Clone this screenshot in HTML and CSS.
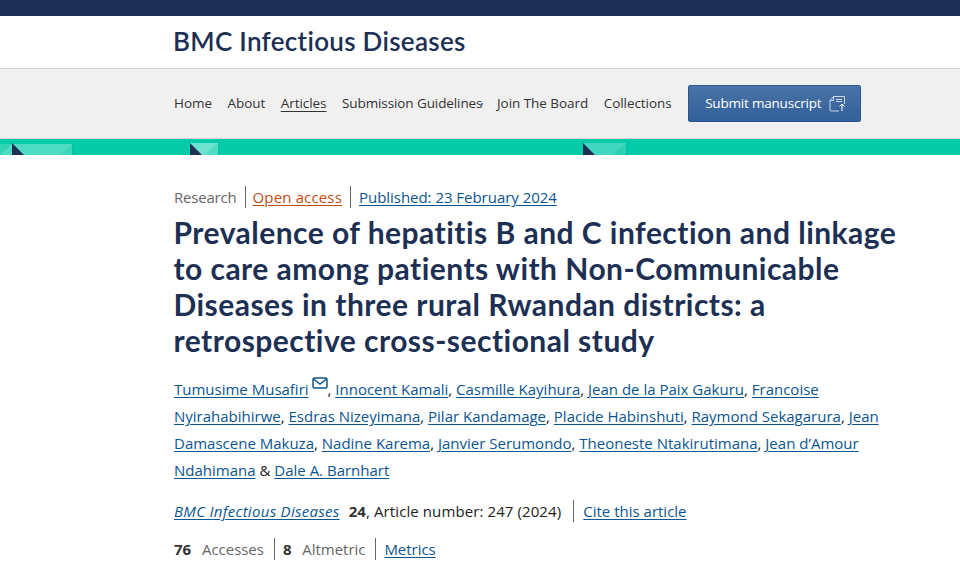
FILE: index.html
```html
<!DOCTYPE html>
<html lang="en">
    <head>
        <meta charset="UTF-8">
        <title>Prevalence of hepatitis B and C infection - BMC Infectious Diseases</title>
        <meta name="viewport" content="width=device-width, initial-scale=1">
        <link rel="stylesheet" href="styles.css">
    </head>
    <body>
        <div class="top-bar"></div>
        <header class="journal-head">
            <div class="wrap"><a class="journal-title" href="#">BMC Infectious Diseases</a></div>
        </header>
        <nav class="main-nav">
            <div class="wrap nav-row">
                <a href="#">Home</a>
                <a href="#">About</a>
                <a href="#" class="current">Articles</a>
                <a href="#" class="nav-guide">Submission Guidelines</a>
                <a href="#">Join The Board</a>
                <a href="#">Collections</a>
                <a href="#" class="submit"><span>Submit manuscript</span>
                    <svg class="submit-icon" width="18" height="17" viewBox="0 0 18 17" fill="none" stroke="#c9d6e8" stroke-width="1">
                        <path d="M1 5.5 4.5 1.5H15.5V9M1 5.5V15a1 1 0 0 0 1 1h8M1 5.5h3.5V1.5"/>
                        <path d="M7 4.5h6M7 6.5h6"/>
                        <path d="M13 16V9M10.500 11.500 13 9l2.500 2.500" stroke="#fff"/>
                    </svg>
                </a>
            </div>
        </nav>
        <div class="pattern">
            <svg class="pattern-art" width="960" height="16" viewBox="0 0 960 16">
                <rect x="0" y="5" width="72" height="11" fill="#4cdcc3"/>
                <path d="M0 16 12 5H0z" fill="#2fd3b6"/>
                <path d="M12 4 24 16H12z" fill="#1d3054"/>
                <path d="M60 16 72 5v11z" fill="#3ed6bc"/>
                <rect x="72" y="5" width="2" height="11" fill="#04c3a1"/>
                <rect x="190" y="4" width="28" height="12" fill="#6fe2cf"/>
                <path d="M190 4 202 16H190z" fill="#1d3054"/>
                <path d="M204 16 218 4v12z" fill="#52dcc5"/>
                <rect x="218" y="4" width="1" height="12" fill="#04c3a1"/>
                <rect x="583" y="4" width="43" height="12" fill="#41d8bf"/>
                <path d="M583 4 595 16H583z" fill="#1d3054"/>
                <path d="M612 16 626 4v12z" fill="#2dd2b4"/>
                <rect x="626" y="4" width="2" height="12" fill="#04c3a1"/>
            </svg>
        </div>
        <main class="wrap article">
            <ul class="meta-line">
                <li class="muted research">Research</li>
                <li><a href="#" class="open-access">Open access</a></li>
                <li><a href="#">Published: 23 February 2024</a></li>
            </ul>
            <h1 class="article-title">Prevalence of hepatitis B and C infection and linkage to care among patients with Non-Communicable Diseases in three rural Rwandan districts: a retrospective cross-sectional study</h1>
            <p class="authors">
                <span><a href="#">Tumusime Musafiri</a> <svg class="mail-icon" width="16" height="12" viewBox="0 0 16 12" fill="none" stroke="#0b5590" stroke-width="1.500"><rect x="1" y="1" width="14" height="10" rx="1.500"/><path d="M1.500 2 8 7l6.500-5"/></svg><span>, </span></span>
                <span><a href="#">Innocent Kamali</a><span>, </span></span>
                <span><a href="#">Casmille Kayihura</a><span>, </span></span>
                <span><a href="#">Jean de la Paix Gakuru</a><span>, </span></span>
                <a href="#">Francoise Nyirahabihirwe</a><span>, </span>
                <span><a href="#">Esdras Nizeyimana</a><span>, </span></span>
                <span><a href="#">Pilar Kandamage</a><span>, </span></span>
                <span><a href="#">Placide Habinshuti</a><span>, </span></span>
                <span><a href="#">Raymond Sekagarura</a><span>, </span></span>
                <a href="#">Jean Damascene Makuza</a><span>, </span>
                <span><a href="#">Nadine Karema</a><span>, </span></span>
                <span><a href="#">Janvier Serumondo</a><span>, </span></span>
                <span><a href="#">Theoneste Ntakirutimana</a><span>, </span></span>
                <a href="#">Jean d’Amour Ndahimana</a> <span>&amp;</span> <a href="#">Dale A. Barnhart</a>
            </p>
            <ul class="meta-line cite-line">
                <li><a href="#" class="journal-link"><i>BMC Infectious Diseases</i></a> <b class="vol">24</b><span>, Article number: 247 (2024)</span></li>
                <li><a href="#">Cite this article</a></li>
            </ul>
            <ul class="meta-line stats-line">
                <li class="muted"><b>76</b> <span>Accesses</span></li>
                <li class="muted"><b>8</b> <span>Altmetric</span></li>
                <li><a href="#">Metrics</a></li>
            </ul>
        </main>
    </body>
</html>
```

FILE: styles.css
```css
html, body{margin: 0; padding: 0;}
body{
    height: 584px;
    overflow: hidden;
    background: #fff;
    color: #222;
    font-family: "Open Sans", "Noto Sans", sans-serif;
    font-size: 15px;
    letter-spacing: -0.03px;
}
a{color: #0b5590; text-underline-offset: 2px;}
.wrap{padding-left: 174px;}
.top-bar{height: 16px; background: #1d3054;}

.journal-head{height: 52px; display: flex; align-items: center; border-bottom: 1px solid #d5d5d5;}
.journal-title{
    display: block;
    margin: -2px 0 0 -1px;
    font-family: Lato, sans-serif;
    font-weight: 600;
    font-size: 26px;
    letter-spacing: 0.3px;
    color: #1d3054;
    text-decoration: none;
}

.main-nav{height: 69px; background: #f0f0f0; border-bottom: 1px solid #d5d5d5;}
.nav-row{display: flex; align-items: center; height: 67px; font-size: 13.5px; letter-spacing: -0.05px;}
.nav-row a{color: #333; text-decoration: none; margin-right: 15.5px; white-space: nowrap;}
.nav-row a.current{text-decoration: underline; text-underline-offset: 3px;}
.nav-row a.nav-guide{position: relative; width: 141px; overflow: hidden; margin-right: 14px; letter-spacing: -0.1px;}
.nav-guide:after{
    position: absolute;
    content: "";
    right: 0;
    top: 50%;
    width: 2px;
    height: 2px;
    background: #3a5fd0;
    border-radius: 50%;
}
.nav-row a.submit{
    display: flex;
    align-items: center;
    gap: 8px;
    box-sizing: border-box;
    width: 173px;
    height: 37px;
    padding: 0 0 2px 16px;
    margin: 2px 0 0 1px;
    color: #fff;
    letter-spacing: -0.2px;
    background: linear-gradient(#4a73a8, #32609a);
    border: 1px solid #2a5791;
    border-radius: 2px;
}
.submit-icon{margin-top: 2px;}

.pattern{height: 16px; background: #05cba8; line-height: 0;}
.pattern-art{display: block;}

.article{padding-top: 31px; padding-right: 60px;}
.meta-line{display: flex; margin: 0; padding: 0; list-style: none; line-height: 22px;}
.meta-line li{padding: 0 8px 0 0; margin-right: 8px; border-right: 1px solid #666;}
.meta-line li:last-child{border-right: 0;}
.muted{color: #666;}
.muted b{color: #333; margin-right: 7px;}
.research{letter-spacing: -0.2px;}
.meta-line li.research{margin-right: 7px;}
.open-access{color: #c24b10; letter-spacing: 0.15px;}

.article-title{
    margin: 6px 0 0 -0.5px;
    font-family: Lato, sans-serif;
    font-weight: 700;
    font-size: 30px;
    line-height: 36px;
    letter-spacing: 0.47px;
    color: #1d3054;
}
.authors{margin: 18px 0 0; line-height: 27px; letter-spacing: 0;}
.mail-icon{vertical-align: 6px; margin-left: -1px;}
.cite-line{margin-top: 16px;}
.journal-link{letter-spacing: 0.3px;}
.vol{color: #333; margin-left: 5px;}
.cite-line li{letter-spacing: 0.1px;}
.cite-line li:first-child{padding-right: 12px; margin-right: 9px;}
.cite-line li:last-child{letter-spacing: 0;}
.stats-line{margin-top: 16px;}
.stats-line li{padding-right: 10px; margin-right: 8px;}
```
